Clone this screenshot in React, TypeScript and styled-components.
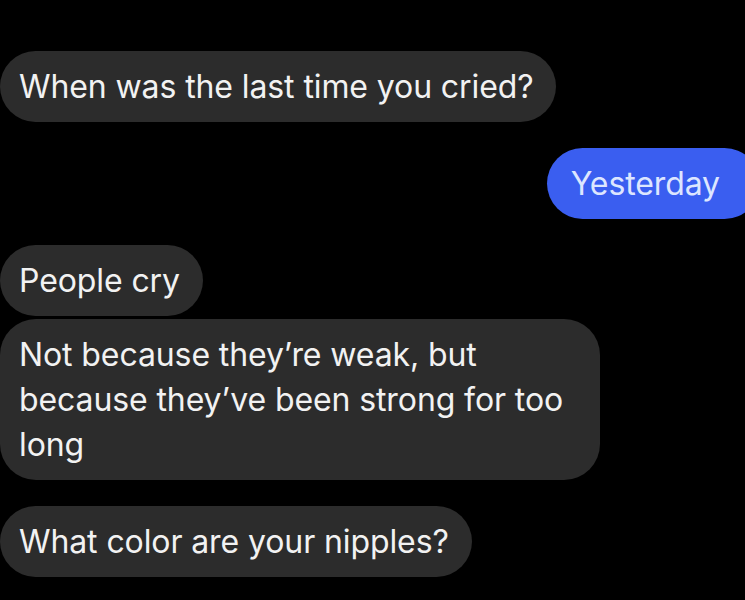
import React from "react";
import styled, { createGlobalStyle } from "styled-components";

const Global = createGlobalStyle`
  html, body { margin: 0; padding: 0; background: #000; }
  body { width: 745px; height: 600px; overflow: hidden; }
`;

const Thread = styled.div`
  display: flex;
  flex-direction: column;
  padding-top: 51px;
  font-family: Inter, "Liberation Sans", sans-serif;
  width: 745px;
  height: 600px;
  box-sizing: border-box;
`;

const Bubble = styled.div<{ $out?: boolean; $gap?: number; $maxw?: number }>`
  align-self: ${(p) => (p.$out ? "flex-end" : "flex-start")};
  margin-top: ${(p) => p.$gap ?? 0}px;
  margin-right: ${(p) => (p.$out ? -15 : 0)}px;
  max-width: ${(p) => p.$maxw ?? 600}px;
  box-sizing: border-box;
  padding: ${(p) => (p.$out ? "13px 40px 13px 24px" : "13px 23px 13px 19px")};
  border-radius: 36px;
  background: ${(p) => (p.$out ? "#3a5ef0" : "#2c2c2c")};
  color: ${(p) => (p.$out ? "#dde6ff" : "#f2f2f2")};
  font-size: 32px;
  line-height: 45px;
  letter-spacing: -0.1px;
`;

export default function App() {
  return (
    <>
      <Global />
      <Thread>
        <Bubble>When was the last time you cried?</Bubble>
        <Bubble $out $gap={26}>Yesterday</Bubble>
        <Bubble $gap={26}>People cry</Bubble>
        <Bubble $gap={3} $maxw={600}>
          Not because they’re weak, but because they’ve been strong for too long
        </Bubble>
        <Bubble $gap={26}>What color are your nipples?</Bubble>
      </Thread>
    </>
  );
}
